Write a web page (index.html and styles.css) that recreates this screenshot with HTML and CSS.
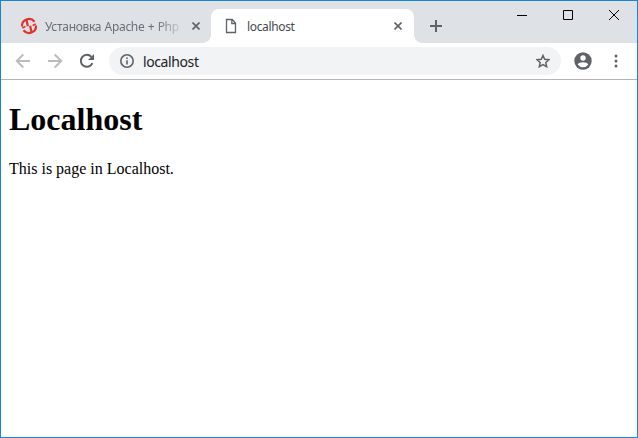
FILE: index.html
```html
<!DOCTYPE html>
<html lang="ru">
<head>
<meta charset="utf-8">
<title>localhost</title>
<link rel="stylesheet" href="styles.css">
</head>
<body>
<div class="window">
  <header class="tabstrip">
    <div class="tab">
      <svg class="favicon" width="18" height="18" viewBox="0 0 18 18" fill="none" stroke="#e2322b">
        <path d="M2 9.500A7 7 0 0 1 14.500 4.700M16 8.500A7 7 0 0 1 3.500 13.300" stroke-width="2.200"/>
        <path d="M6.500 3L7.900 9.200M11.500 15L10.100 8.800" stroke-width="2.200"/>
        <path d="M2.300 11l3-1.500M15.700 7l-3 1.500" stroke-width="1.500"/>
      </svg>
      <span class="tab-title faded">Установка Apache + Php</span>
      <svg class="close" width="8" height="8" viewBox="0 0 8 8"><path d="M.5.5l7 7M7.5.5l-7 7"/></svg>
    </div>
    <div class="tab active">
      <svg class="page-icon" width="12" height="16" viewBox="0 0 12 16"><path d="M1.500 1.500h5.700l3.300 3.600v9.400h-9zM6.800 1.500v4h3.700"/></svg>
      <span class="tab-title">localhost</span>
      <svg class="close" width="8" height="8" viewBox="0 0 8 8"><path d="M.5.5l7 7M7.5.5l-7 7"/></svg>
    </div>
    <svg class="new-tab" width="12" height="12" viewBox="0 0 12 12"><path d="M6 0v12M0 6h12"/></svg>
    <div class="controls">
      <svg width="46" height="28" viewBox="0 0 46 28"><path d="M18 14.500h10"/></svg>
      <svg width="46" height="28" viewBox="0 0 46 28"><path d="M18.500 9.500h9v9h-9z"/></svg>
      <svg width="46" height="28" viewBox="0 0 46 28"><path d="M18 9l10 10M28 9l-10 10"/></svg>
    </div>
  </header>
  <nav class="toolbar">
    <svg class="nav-icon disabled" width="16" height="16" viewBox="0 0 16 16"><path d="M15 8H2M8.300 1.500L1.800 8l6.500 6.500"/></svg>
    <svg class="nav-icon disabled" width="16" height="16" viewBox="0 0 16 16"><path d="M1 8h13M7.700 1.500L14.200 8l-6.500 6.500"/></svg>
    <svg class="nav-icon" width="16" height="16" viewBox="0 0 16 16"><path d="M13.400 10.200A6 6 0 1 1 12.400 3.900"/><path class="solid" d="M15 1v6H9z"/></svg>
    <div class="omnibox">
      <svg class="info" width="14" height="14" viewBox="0 0 14 14"><circle cx="7" cy="7" r="6.200"/><path d="M7 6.200v4.300M7 3.500v1.600"/></svg>
      <span class="url">localhost</span>
      <svg class="star" width="14" height="14" viewBox="0 0 14 14"><path d="M7 1.500l1.700 3.800 4.300.4-3.200 2.800.9 4.200L7 10.500l-3.700 2.200.9-4.200L1 5.700l4.300-.4z"/></svg>
    </div>
    <svg class="avatar" width="18" height="18" viewBox="0 0 18 18"><circle cx="9" cy="9" r="8.700" fill="#5f6368"/><circle cx="9" cy="6" r="2.700" fill="#fff"/><path d="M3.700 12.500c1-3 9.600-3 10.600 0a6.500 6.500 0 0 1-10.600 0z" fill="#fff"/></svg>
    <svg class="menu" width="4" height="14" viewBox="0 0 4 14"><circle cx="2" cy="2" r="1.500"/><circle cx="2" cy="7" r="1.500"/><circle cx="2" cy="12" r="1.500"/></svg>
  </nav>
  <main class="page">
    <h1>Localhost</h1>
    <p>This is page in Localhost.</p>
  </main>
</div>
</body>
</html>
```

FILE: styles.css
```css
* { box-sizing: border-box; }
body { margin: 0; }
svg { display: block; flex: none; }

.window {
  width: 638px;
  height: 438px;
  border: 1px solid #1883d7;
  background: #fff;
  display: flex;
  flex-direction: column;
  overflow: hidden;
}

.tabstrip {
  height: 42px;
  padding-top: 8px;
  background: #dee1e6;
  display: flex;
  flex: none;
}

.tab {
  width: 203px;
  height: 34px;
  padding: 0 12px 0 14px;
  display: flex;
  align-items: center;
  font: 12px "Noto Sans", "Open Sans", sans-serif;
  color: #6b6f74;
}
.tab:first-child { width: 210px; padding: 0 11px 0 19px; }
.tab.active {
  position: relative;
  background: #fff;
  border-radius: 8px 8px 0 0;
  color: #45494d;
}
.tab.active::before,
.tab.active::after {
  content: "";
  position: absolute;
  bottom: 0;
  width: 8px;
  height: 8px;
}
.tab.active::before { left: -8px; background: radial-gradient(circle at 0 0, #dee1e6 7.5px, #fff 8px); }
.tab.active::after { right: -8px; background: radial-gradient(circle at 100% 0, #dee1e6 7.5px, #fff 8px); }

.favicon { margin-right: 7px; }
.page-icon { margin-right: 10px; fill: none; stroke: #5f6368; stroke-width: 1.3; }
.tab-title { flex: 1; min-width: 0; white-space: nowrap; overflow: hidden; letter-spacing: -.35px; }
.tab-title.faded {
  flex: none;
  width: 135px;
  margin-right: 12px;
  letter-spacing: -.3px;
  word-spacing: .5px;
  -webkit-mask-image: linear-gradient(to right, #000 112px, transparent 140px);
  mask-image: linear-gradient(to right, #000 112px, transparent 140px);
}
.close { fill: none; stroke: #5f6368; stroke-width: 1.6; }
.new-tab { margin: 11px 0 0 16px; fill: none; stroke: #5f6368; stroke-width: 2; }

.controls { display: flex; margin: -8px 0 0 auto; fill: none; stroke: #000; stroke-width: 1; }

.toolbar {
  height: 37px;
  flex: none;
  padding: 0 16px 0 14px;
  display: flex;
  align-items: center;
  border-bottom: 1px solid #b6b4b6;
}
.nav-icon { margin-right: 16px; fill: none; stroke: #5f6368; stroke-width: 2; }
.nav-icon .solid { fill: #5f6368; stroke: none; }
.nav-icon.disabled { stroke: #babcbe; }
.omnibox {
  width: 452px;
  height: 28px;
  margin-left: -2px;
  padding: 0 11px;
  border-radius: 14px;
  background: #f1f3f4;
  display: flex;
  align-items: center;
}
.info { fill: none; stroke: #5f6368; stroke-width: 1.6; }
.url { flex: 1; margin-left: 9px; font: 14px "Noto Sans", "Open Sans", sans-serif; letter-spacing: -.4px; color: #202124; }
.star { fill: none; stroke: #5f6368; stroke-width: 1.5; }
.avatar { margin-left: 13px; }
.menu { margin-left: auto; margin-right: 3.5px; fill: #5f6368; }

.page { flex: 1; padding: 0 8px; font: 16px "Liberation Serif", "Times New Roman", serif; color: #000; }
.page h1 { margin: 21px 0 22px; font-size: 32px; line-height: 37px; }
.page p { margin: 0; line-height: 18px; }
```
